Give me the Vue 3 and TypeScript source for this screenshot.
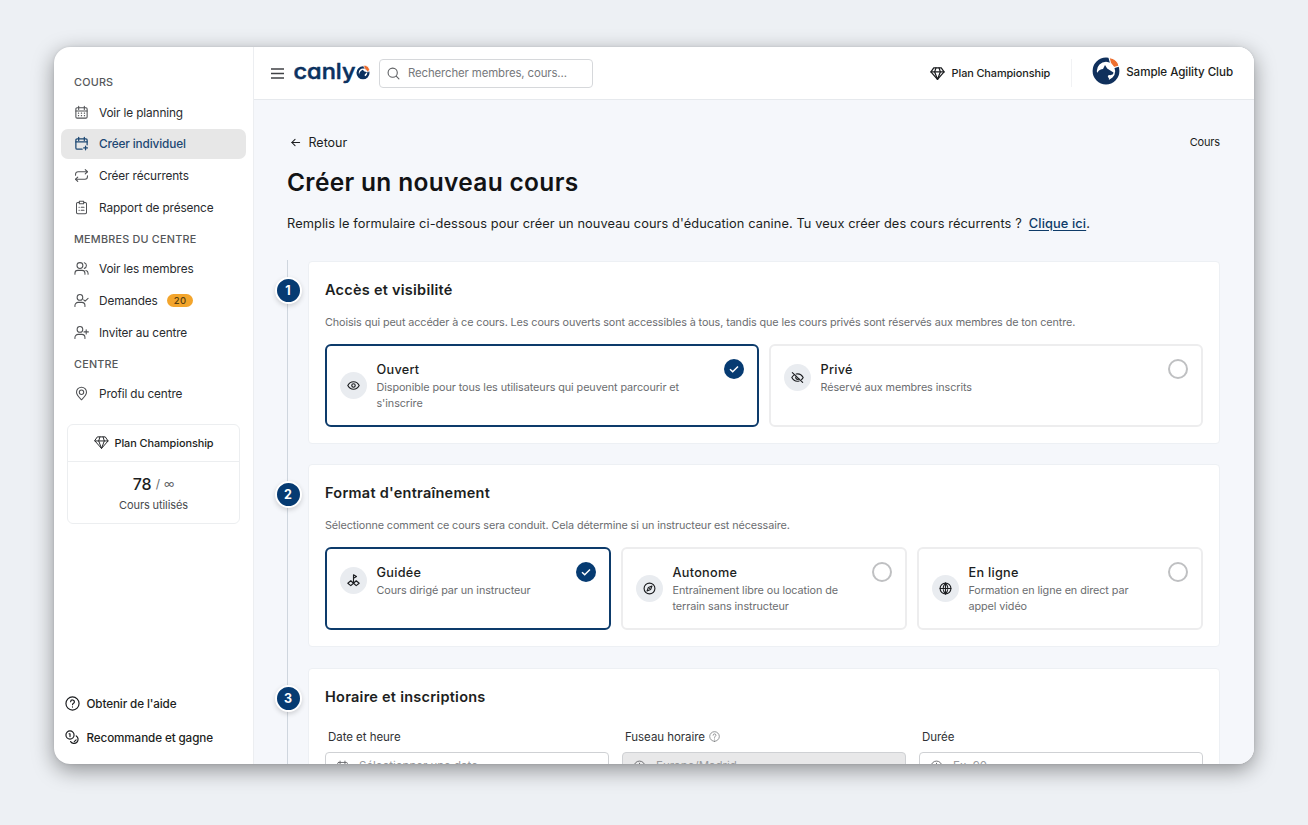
<script setup lang="ts">
type Shape = string[]

const icons: Record<string, Shape> = {
  calendar: ['M5 4.5h14a2 2 0 0 1 2 2V19a2 2 0 0 1-2 2H5a2 2 0 0 1-2-2V6.500a2 2 0 0 1 2-2z', 'M3 9.500h18M7.500 2v5M16.500 2v5', 'M7 13h.5M11.700 13h.5M16.500 13h.5M7 17h.5M11.700 17h.5M16.500 17h.5'],
  calendarAdd: ['M13 21H5a2 2 0 0 1-2-2V6.500a2 2 0 0 1 2-2h14a2 2 0 0 1 2 2V14', 'M3 9.500h18M7.500 2v5M16.500 2v5', 'M18.500 16v6M15.500 19h6'],
  repeat: ['M18 2.500l3.500 3.500L18 9.500', 'M2.500 11.500V10a4 4 0 0 1 4-4h15', 'M6 14.500L2.500 18 6 21.500', 'M21.500 12.500V14a4 4 0 0 1-4 4h-15'],
  clipboard: ['M8 4H6a2 2 0 0 0-2 2v14a2 2 0 0 0 2 2h12a2 2 0 0 0 2-2V6a2 2 0 0 0-2-2h-2', 'M8.500 2h7v4h-7z', 'M8 11.500h.5M11.500 11.500H16M8 16.500h.5M11.500 16.500H16'],
  users: ['M9.500 12a4.700 4.700 0 1 0 0-9.400 4.700 4.700 0 0 0 0 9.400z', 'M1.500 21v-1.500a4.500 4.500 0 0 1 4.500-4.500h7a4.500 4.500 0 0 1 4.500 4.500V21', 'M16.500 2.800a4.700 4.700 0 0 1 0 9', 'M19 15.300a4.500 4.500 0 0 1 3.500 4.400V21'],
  userCheck: ['M9.500 11.500a4.500 4.500 0 1 0 0-9 4.500 4.500 0 0 0 0 9z', 'M1.500 21.500V20a5 5 0 0 1 5-5h6a5 5 0 0 1 5 5v1.500', 'M15.500 11l2.200 2 4.800-4.500'],
  userPlus: ['M9.500 11.500a4.500 4.500 0 1 0 0-9 4.500 4.500 0 0 0 0 9z', 'M1.500 21.500V20a5 5 0 0 1 5-5h6a5 5 0 0 1 5 5v1.500', 'M19.500 7.500v7M16 11h7'],
  pin: ['M12 22c3-3 8-7.200 8-12a8 8 0 1 0-16 0c0 4.800 5 9 8 12z', 'M12 13.500a3.500 3.500 0 1 0 0-7 3.500 3.500 0 0 0 0 7z'],
  gem: ['M6 3h12l4.500 6.500L12 21.500 1.500 9.500z', 'M1.500 9.500h21', 'M9.500 3L7.500 9.500 12 21.500l4.500-12L14.500 3'],
  help: ['M12 22.500a10.500 10.500 0 1 0 0-21 10.500 10.500 0 0 0 0 21z', 'M9 9.200a3 3 0 0 1 6 .3c0 2-3 2.300-3 4.500', 'M12 17.300v.4'],
  coins: ['M8 14.500a6.500 6.500 0 1 0 0-13 6.500 6.500 0 0 0 0 13z', 'M6.500 6H8v4.500', 'M18 9.500a6.500 6.500 0 1 1-9 9', 'M14.800 18.500l3-2.800'],
  search: ['M10.500 19a8.500 8.500 0 1 0 0-17 8.500 8.500 0 0 0 0 17z', 'M17 17l5 5'],
  back: ['M21 12H4', 'M11 5l-7 7 7 7'],
  eye: ['M1.500 12C4 7.200 7.500 5 12 5s8 2.200 10.500 7C20 16.800 16.500 19 12 19S4 16.800 1.500 12z', 'M12 15.200a3.200 3.200 0 1 0 0-6.400 3.200 3.200 0 0 0 0 6.400z'],
  eyeOff: ['M2.500 3l19 18', 'M9.500 5.600c5.500-1.200 10 1 13 6.400-.8 1.500-1.800 2.800-3 3.900', 'M6 7.200C4.200 8.400 2.700 10 1.500 12c3 5.500 8 8 13.500 6.400', 'M9.700 9.800a3.200 3.200 0 0 0 4.600 4.500'],
  flag: ['M12 13V1.500l5.500 3L12 8', 'M7 12.500L1.500 17 7 21.500l5-4.500z', 'M17 12.500l5.500 4.500-5.500 4.500-5-4.500z', 'M12 13v4'],
  compass: ['M12 22a10 10 0 1 0 0-20 10 10 0 0 0 0 20z', 'M16.500 7.500l-2.500 6.500-6.500 2.500 2.500-6.500z', 'M12 12h.1'],
  globe: ['M12 22a10 10 0 1 0 0-20 10 10 0 0 0 0 20z', 'M2 12h20', 'M12 2C6.500 8 6.500 16 12 22c5.500-6 5.500-14 0-20z', 'M12 2v20'],
  clock: ['M12 22a10 10 0 1 0 0-20 10 10 0 0 0 0 20z', 'M12 6v6.500l4 2'],
}

interface NavItem { icon: string; label: string; active?: boolean; badge?: string }
const groups: { title: string; items: NavItem[] }[] = [
  { title: 'COURS', items: [
    { icon: 'calendar', label: 'Voir le planning' },
    { icon: 'calendarAdd', label: 'Créer individuel', active: true },
    { icon: 'repeat', label: 'Créer récurrents' },
    { icon: 'clipboard', label: 'Rapport de présence' },
  ] },
  { title: 'MEMBRES DU CENTRE', items: [
    { icon: 'users', label: 'Voir les membres' },
    { icon: 'userCheck', label: 'Demandes', badge: '20' },
    { icon: 'userPlus', label: 'Inviter au centre' },
  ] },
  { title: 'CENTRE', items: [{ icon: 'pin', label: 'Profil du centre' }] },
]

const sections = [
  { title: 'Accès et visibilité', cls: 's1',
    text: 'Choisis qui peut accéder à ce cours. Les cours ouverts sont accessibles à tous, tandis que les cours privés sont réservés aux membres de ton centre.',
    options: [
      { icon: 'eye', title: 'Ouvert', lines: ['Disponible pour tous les utilisateurs qui peuvent parcourir et', "s'inscrire"], on: true },
      { icon: 'eyeOff', title: 'Privé', lines: ['Réservé aux membres inscrits'], on: false },
    ] },
  { title: "Format d'entraînement", cls: 's2',
    text: 'Sélectionne comment ce cours sera conduit. Cela détermine si un instructeur est nécessaire.',
    options: [
      { icon: 'flag', title: 'Guidée', lines: ['Cours dirigé par un instructeur'], on: true },
      { icon: 'compass', title: 'Autonome', lines: ['Entraînement libre ou location de', 'terrain sans instructeur'], on: false },
      { icon: 'globe', title: 'En ligne', lines: ['Formation en ligne en direct par', 'appel vidéo'], on: false },
    ] },
]

const fields = [
  { label: 'Date et heure', icon: 'calendar', value: 'Sélectionner une date' },
  { label: 'Fuseau horaire', icon: 'clock', value: 'Europe/Madrid', help: true, disabled: true },
  { label: 'Durée', icon: 'clock', value: 'Ex: 90' },
]
</script>

<template>
  <div class="stage">
    <div class="window">
      <aside class="sidebar">
        <nav>
          <template v-for="g in groups" :key="g.title">
            <h6>{{ g.title }}</h6>
            <a v-for="i in g.items" :key="i.label" class="nav" :class="{ active: i.active }">
              <svg class="icon" viewBox="0 0 24 24"><path v-for="d in icons[i.icon]" :key="d" :d="d" /></svg>
              <span>{{ i.label }}</span>
              <b v-if="i.badge" class="badge">{{ i.badge }}</b>
            </a>
          </template>
        </nav>
        <div class="plan-card">
          <div class="plan-head">
            <svg class="icon" viewBox="0 0 24 24"><path v-for="d in icons.gem" :key="d" :d="d" /></svg>
            <span>Plan Championship</span>
          </div>
          <div class="usage"><strong>78</strong><span class="slash">/</span><span class="inf">∞</span></div>
          <div class="used">Cours utilisés</div>
        </div>
        <div class="foot">
          <a><svg class="icon" viewBox="0 0 24 24"><path v-for="d in icons.help" :key="d" :d="d" /></svg><span>Obtenir de l'aide</span></a>
          <a><svg class="icon" viewBox="0 0 24 24"><path v-for="d in icons.coins" :key="d" :d="d" /></svg><span>Recommande et gagne</span></a>
        </div>
      </aside>

      <div class="main">
        <header>
          <svg class="menu" viewBox="0 0 13 11"><path d="M0 1h13M0 5.500h13M0 10h13" /></svg>
          <svg class="brand" viewBox="0 0 76 32">
            <text x="-.5" y="21.800" textLength="62" lengthAdjust="spacingAndGlyphs">canly</text>
            <circle cx="69" cy="15.800" r="5.400" fill="#fff" stroke="#0b315f" stroke-width="2.300" />
            <path d="M65 19.300c0-4 2-6 4-6.500l1 1.500 3 1-2 2c-1 1 0 2 1 2.500-2 2-5 2-7-.5z" fill="#0b315f" />
            <path d="M69.500 8.200l1 3 3.500 4 1.500-2.500c-.5-2.500-2.500-4.500-6-4.500z" fill="#ee6c2c" stroke="#fff" stroke-width=".7" />
          </svg>
          <div class="search">
            <svg class="icon" viewBox="0 0 24 24"><path v-for="d in icons.search" :key="d" :d="d" /></svg>
            <span>Rechercher membres, cours...</span>
          </div>
          <div class="top-plan">
            <svg class="icon" viewBox="0 0 24 24"><path v-for="d in icons.gem" :key="d" :d="d" /></svg>
            <span>Plan Championship</span>
          </div>
          <div class="club">
            <svg viewBox="0 0 28 28">
              <circle cx="14" cy="14" r="11.300" fill="#fff" stroke="#10305c" stroke-width="4.200" />
              <path d="M4 21C4 15.500 7 12.500 11 12l2-4 2.200 3.500 2.300 1.500 4 2.600c0 1.800-1.500 2.700-3.800 2.500-2 0-2.400 1.500-1.200 2.700 1 1 .5 2.500-1 4.500C11 26.500 6 25 4 21z" fill="#10305c" />
              <path d="M17 .5l1.500 5.500 3.500 4.500 5-1.500C26.500 5 22.500 1.500 17 .5z" fill="#ee6f2f" stroke="#fff" stroke-width="1.100" />
            </svg>
            <span>Sample Agility Club</span>
          </div>
        </header>

        <main>
          <div class="crumbs">
            <a class="back"><svg class="icon" viewBox="0 0 24 24"><path v-for="d in icons.back" :key="d" :d="d" /></svg><span>Retour</span></a>
            <span class="crumb">Cours</span>
          </div>
          <h1>Créer un nouveau cours</h1>
          <p class="intro"><span>Remplis le formulaire ci-dessous pour créer un nouveau cours d'éducation canine. Tu veux créer des cours récurrents ?</span><a>Clique ici</a>.</p>

          <div class="timeline">
            <section v-for="(s, n) in sections" :key="s.title" :class="s.cls">
              <span class="step">{{ n + 1 }}</span>
              <h2>{{ s.title }}</h2>
              <p class="desc">{{ s.text }}</p>
              <div class="options">
                <div v-for="o in s.options" :key="o.title" class="option" :class="{ on: o.on }">
                  <div class="body">
                    <span class="disc"><svg class="icon" viewBox="0 0 24 24"><path v-for="d in icons[o.icon]" :key="d" :d="d" /></svg></span>
                    <div class="copy">
                      <h3>{{ o.title }}</h3>
                      <p v-for="l in o.lines" :key="l">{{ l }}</p>
                    </div>
                  </div>
                  <span class="radio"><svg v-if="o.on" viewBox="0 0 20 20"><path d="M6 10.300l2.700 2.500L14 7.500" /></svg></span>
                </div>
              </div>
            </section>
            <section class="s3">
              <span class="step">3</span>
              <h2>Horaire et inscriptions</h2>
              <div class="fields">
                <div v-for="f in fields" :key="f.label" class="field">
                  <label>{{ f.label }}<svg v-if="f.help" class="icon" viewBox="0 0 24 24"><path v-for="d in icons.help" :key="d" :d="d" /></svg></label>
                  <div class="input" :class="{ disabled: f.disabled }">
                    <svg class="icon" viewBox="0 0 24 24"><path v-for="d in icons[f.icon]" :key="d" :d="d" /></svg>
                    <span>{{ f.value }}</span>
                  </div>
                </div>
              </div>
            </section>
          </div>
        </main>
      </div>
    </div>
  </div>
</template>

<style>
html, body { margin: 0; background: #edf0f4; overflow: hidden; }
</style>

<style scoped>
* { box-sizing: border-box; }
h1, h2, h3, h6, p { margin: 0; font-weight: 400; }
.stage { width: 1308px; height: 825px; padding: 47px 54px 61px; background: #edf0f4; font-family: Inter, "Liberation Sans", sans-serif; color: #1c1e21; overflow: hidden; white-space: nowrap; }
.window { display: flex; width: 1200px; height: 717px; border-radius: 16px; background: #fff; overflow: hidden; box-shadow: 0 6px 21px rgba(0, 0, 0, .4), 0 0 3px rgba(0, 0, 0, .1); }
.icon { flex: none; width: 15px; height: 15px; fill: none; stroke: currentColor; stroke-width: 1.7; stroke-linecap: round; stroke-linejoin: round; }
.sidebar { display: flex; flex-direction: column; flex: none; width: 200px; padding: 20px 7px 0; border-right: 1px solid #eceef1; }
h6 { height: 30px; padding-left: 13px; font-size: 10.800px; line-height: 31.500px; font-weight: 500; letter-spacing: .23px; color: #55575a; }
.nav { display: flex; align-items: center; height: 30px; margin-bottom: 1.7px; padding-left: 13px; border-radius: 7px; font-size: 11.800px; letter-spacing: -.13px; color: #292b2e; }
.nav .icon { margin-right: 10px; color: #505255; }
.nav span { padding-top: 1px; }
.nav.active { background: #e7e7e7; color: #1d4873; font-weight: 500; }
.nav.active .icon { color: #1d4873; stroke-width: 2; }
.badge { margin-left: 9.500px; width: 26px; height: 13px; border-radius: 7px; background: #f3a52c; color: #59400f; font-size: 9.5px; line-height: 13px; font-weight: 500; text-align: center; letter-spacing: .4px; }
.plan-card { height: 100px; margin: 13px 6px 0; border: 1px solid #eceef0; border-radius: 6px; text-align: center; }
.plan-head { display: flex; align-items: center; justify-content: center; height: 37px; border-bottom: 1px solid #eceef0; font-size: 10.900px; letter-spacing: -.08px; font-weight: 500; gap: 6px; }
.plan-head .icon { stroke-width: 1.500; }
.usage { display: flex; align-items: center; justify-content: center; gap: 4px; height: 22px; margin-top: 11px; font-size: 12px; }
.usage strong { font-size: 16px; font-weight: 500; }
.slash, .inf { color: #66686b; }
.inf { font-size: 11px; }
.used { margin-top: 3px; font-size: 11px; letter-spacing: -.1px; line-height: 15px; color: #47494c; }
.foot { margin-top: auto; padding: 0 0 10px 4px; font-size: 11.700px; letter-spacing: -.12px; font-weight: 500; }
.foot a { display: flex; align-items: center; height: 33.500px; gap: 6.500px; }
.foot span { padding-top: 1px; }
.foot .icon { stroke-width: 1.900; }
.main { display: flex; flex-direction: column; flex: 1; min-width: 0; background: #f5f7fb; }
header { display: flex; align-items: center; flex: none; height: 53px; padding: 0 21px 0 17px; background: #fff; border-bottom: 1px solid #e6e9ed; }
.menu { width: 13px; height: 11px; stroke: #404246; stroke-width: 1.400; }
.brand { width: 76px; height: 32px; margin-left: 10px; overflow: visible; }
.brand text { font: 500 21.500px Inter, sans-serif; font-feature-settings: "cv11"; fill: #0b315f; stroke: #0b315f; stroke-width: .5; stroke-linejoin: round; }
.search { display: flex; align-items: center; width: 214px; height: 29px; margin-left: 9px; padding-left: 7px; gap: 7px; border: 1px solid #d6d8db; border-radius: 4px; font-size: 11.400px; letter-spacing: -.12px; color: #76787c; }
.search .icon { width: 13px; height: 13px; margin-right: 1px; color: #5d5f62; stroke-width: 2; }
.top-plan { display: flex; align-items: center; height: 28px; margin-left: auto; padding-right: 21px; gap: 6.500px; border-right: 1px solid #f1f2f4; font-size: 10.900px; letter-spacing: -.1px; font-weight: 500; }
.top-plan .icon { stroke-width: 2; }
.club { display: flex; align-items: center; margin: -4px 0 0 20px; gap: 6px; font-size: 11.600px; letter-spacing: -.06px; font-weight: 500; }
.club svg { width: 28px; height: 28px; }
.club span { padding-top: 1px; }
main { padding: 34px 34px 0 33px; }
.crumbs { display: flex; align-items: center; justify-content: space-between; height: 16px; }
.back { display: flex; align-items: center; padding-left: 3px; gap: 7.500px; font-size: 12.500px; }
.back .icon { width: 11px; height: 11px; stroke-width: 2.300; }
.crumb { font-size: 11px; letter-spacing: -.15px; }
h1 { height: 32px; margin-top: 16px; font-size: 24.500px; line-height: 32px; letter-spacing: .32px; font-weight: 600; color: #121315; }
.intro { height: 20px; margin-top: 16px; font-size: 12.800px; letter-spacing: .087px; line-height: 20px; }
.intro a { margin-left: 7px; color: #0e3b68; font-weight: 500; text-decoration: underline; text-underline-offset: 2px; letter-spacing: .12px; }
.timeline { margin-top: 26px; padding: 1px 0 0 20px; border-left: 1px solid #cfd6de; }
section { position: relative; width: 912px; height: 183px; margin-bottom: 20px; padding: 16px; background: #fff; border: 1px solid #edf0f4; border-radius: 4px; }
.s2 { margin-bottom: 21px; }
.step { position: absolute; left: -34.500px; top: 15px; width: 27px; height: 27px; border: 2px solid #fff; border-radius: 50%; background: #063b72; color: #fff; font-size: 12.500px; line-height: 23px; font-weight: 700; text-align: center; box-shadow: 0 2px 5px rgba(0, 0, 0, .16); }
.s2 .step, .s3 .step { top: 16px; }
h2 { height: 24px; font-size: 14.500px; line-height: 24px; letter-spacing: .25px; font-weight: 600; }
.desc { height: 18px; margin-top: 12px; font-size: 10.800px; line-height: 18px; letter-spacing: -.096px; color: #6b6d70; }
.options { display: flex; gap: 10px; margin-top: 12px; }
.option { display: flex; flex: 1; justify-content: space-between; height: 83px; padding: 13px 13px 0 12.700px; border: 2px solid #ededee; border-radius: 6px; }
.option.on { border-color: #0d3b6b; }
.body { display: flex; align-items: center; align-self: flex-start; }
.disc { display: flex; align-items: center; justify-content: center; width: 27px; height: 27px; margin-right: 9.800px; border-radius: 50%; background: #e9ecf0; }
.disc .icon { width: 13px; height: 13px; stroke-width: 2.100; }
.copy { margin: 1px 0 -1px; }
h3 { height: 20px; font-size: 12.700px; line-height: 20px; letter-spacing: .28px; font-weight: 500; }
.copy p { height: 16.300px; font-size: 10.800px; line-height: 16.300px; letter-spacing: -.07px; color: #6b6d70; }
.radio { flex: none; width: 20px; height: 20px; border: 2px solid #bfc0c2; border-radius: 50%; }
.on .radio { border: 0; background: #063b72; }
.radio svg { display: block; width: 20px; height: 20px; fill: none; stroke: #fff; stroke-width: 1.500; }
.fields { display: flex; gap: 13px; margin-top: 19px; }
.field { flex: 1; }
.field label { display: flex; align-items: center; height: 17px; padding-left: 3px; gap: 4px; font-size: 11.500px; letter-spacing: -.05px; color: #303235; }
.field label .icon { width: 11px; height: 11px; color: #77797c; }
.input { display: flex; align-items: center; height: 28px; margin-top: 7px; padding-left: 10px; gap: 10px; border: 1px solid #cfd1d4; border-radius: 4px; font-size: 11.500px; color: #9a9c9f; }
.input .icon { width: 13px; height: 13px; color: #66686b; }
.input.disabled { background: #e8e8e9; }
</style>
